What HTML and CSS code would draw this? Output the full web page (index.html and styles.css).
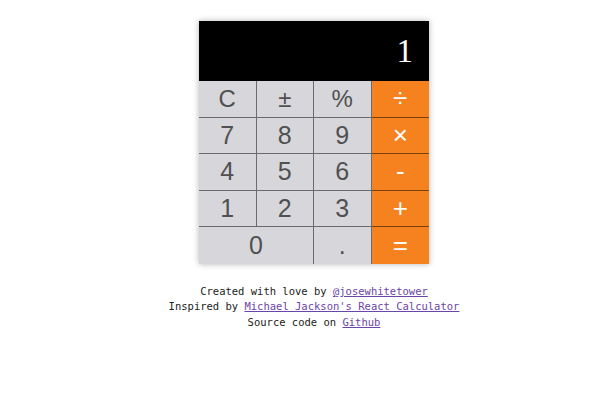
FILE: index.html
```html
<!DOCTYPE html>
<html>
<head>
<meta charset="utf-8">
<link rel="stylesheet" href="styles.css">
</head>
<body>
<div class="page">
  <div class="calc">
    <div class="display">1</div>
    <div class="keypad">
      <div class="key fn">C</div>
      <div class="key fn">±</div>
      <div class="key fn">%</div>
      <div class="key op">÷</div>
      <div class="key">7</div>
      <div class="key">8</div>
      <div class="key">9</div>
      <div class="key op">×</div>
      <div class="key">4</div>
      <div class="key">5</div>
      <div class="key">6</div>
      <div class="key op">-</div>
      <div class="key">1</div>
      <div class="key">2</div>
      <div class="key">3</div>
      <div class="key op">+</div>
      <div class="key zero last">0</div>
      <div class="key last">.</div>
      <div class="key op last">=</div>
    </div>
  </div>
  <div class="footer">
    <p>Created with love by <a href="#">@josewhitetower</a></p>
    <p>Inspired by <a href="#">Michael Jackson's React Calculator</a></p>
    <p>Source code on <a href="#">Github</a></p>
  </div>
</div>
</body>
</html>
```
FILE: styles.css
```css
html, body {
  margin: 0;
  padding: 0;
  background: #fff;
}
.page {
  display: flex;
  flex-direction: column;
  align-items: center;
  padding-top: 21px;
  padding-left: 28px;
}
.calc {
  width: 230px;
  box-shadow: 0 0 6px rgba(0, 0, 0, 0.3);
}
.display {
  height: 60px;
  background: #000;
  color: #fff;
  font-family: "Liberation Serif", serif;
  font-size: 33px;
  display: flex;
  align-items: center;
  justify-content: flex-end;
  padding-right: 16px;
  box-sizing: border-box;
}
.keypad {
  display: grid;
  grid-template-columns: repeat(4, 1fr);
  grid-template-rows: repeat(5, 36.6px);
}
.key {
  background: #d7d7db;
  color: #505050;
  font-family: "Liberation Sans", Arial, sans-serif;
  font-size: 25px;
  display: flex;
  align-items: center;
  justify-content: center;
  border-right: 1px solid rgba(0, 0, 0, 0.5);
  border-bottom: 1px solid rgba(0, 0, 0, 0.5);
}
.fn {
  font-size: 24px;
}
.op {
  background: #f5821f;
  color: #fff;
  font-size: 26px;
  border-right: none;
}
.zero {
  grid-column: span 2;
}
.last {
  border-bottom: none;
}
.footer {
  margin-top: 20px;
  font-family: "DejaVu Sans Mono", monospace;
  font-size: 10.5px;
  color: #222;
  text-align: center;
}
.footer p {
  margin: 0;
  line-height: 15.5px;
}
.footer a {
  color: #6b45a8;
}
```
